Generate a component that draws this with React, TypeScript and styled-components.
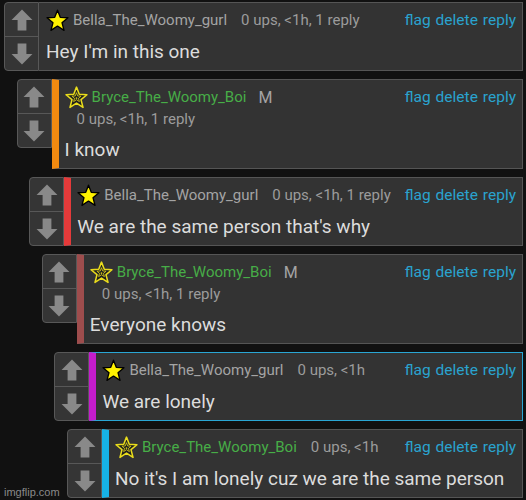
import React from "react";
import styled, { createGlobalStyle } from "styled-components";

const GlobalStyle = createGlobalStyle`
  html, body {
    margin: 0;
    padding: 0;
    background: #111111;
  }
  body {
    font-family: Roboto, "Noto Sans", "Liberation Sans", sans-serif;
    width: 526px;
    height: 500px;
    overflow: hidden;
  }
`;

const Page = styled.div`
  position: relative;
  display: flex;
  flex-direction: column;
  gap: 8px;
  padding: 2px 3px 0 4px;
  height: 500px;
  box-sizing: border-box;
`;

const Row = styled.div<{ $depth: number }>`
  display: flex;
  align-items: flex-start;
  margin-left: ${({ $depth }) => $depth * 12.6}px;
`;

const Votes = styled.div`
  flex: 0 0 35px;
  height: 69px;
  box-sizing: border-box;
  display: flex;
  flex-direction: column;
  background: #353535;
  border: 1px solid #585858;
  border-radius: 4px 0 0 4px;
`;

const VoteBtn = styled.div<{ $top?: boolean }>`
  flex: 1;
  display: flex;
  align-items: center;
  justify-content: center;
  border-bottom: ${({ $top }) => ($top ? "1px solid #585858" : "none")};
`;

const Panel = styled.div<{ $bar?: string; $hi?: boolean }>`
  flex: 1;
  min-height: 69px;
  box-sizing: border-box;
  background: #333333;
  border: 1px solid ${({ $hi }) => ($hi ? "#2aa6d4" : "#555555")};
  border-left: ${({ $bar }) => ($bar ? `7px solid ${$bar}` : "none")};
  padding: 5px 6px 3px ${({ $bar }) => ($bar ? "6px" : "7px")};
`;

const Header = styled.div`
  display: flex;
  align-items: center;
  height: 24px;
`;

const Name = styled.span<{ $mod?: boolean }>`
  margin-left: 4px;
  font-size: 15px;
  color: ${({ $mod }) => ($mod ? "#47ad47" : "#a4a4a4")};
  white-space: nowrap;
`;

const Badge = styled.span`
  margin-left: 12px;
  font-size: 16px;
  color: #a4a4a4;
`;

const Meta = styled.span<{ $own?: boolean }>`
  margin-left: ${({ $own }) => ($own ? "12px" : "14px")};
  font-size: 15px;
  color: #9c9c9c;
  white-space: nowrap;
  display: ${({ $own }) => ($own ? "block" : "inline")};
  line-height: ${({ $own }) => ($own ? "21px" : "normal")};
`;

const Links = styled.div`
  margin-left: auto;
  display: flex;
  gap: 5px;
  font-size: 15.5px;
  color: #2aa3cf;
`;

const Body = styled.div`
  margin-top: 5px;
  line-height: 30px;
  font-size: 19px;
  color: #dcdcdc;
  white-space: nowrap;
`;

const Watermark = styled.div`
  position: absolute;
  left: 4px;
  bottom: 2px;
  font-family: "Liberation Sans", Arial, sans-serif;
  font-size: 11px;
  color: #8a8a8a;
`;

const Arrow = ({ down }: { down?: boolean }) => (
  <svg
    width="22"
    height="22"
    viewBox="0 0 20 20"
    style={down ? { transform: "rotate(180deg)" } : undefined}
  >
    <polygon points="10,0.5 19.5,10 14,10 14,19.5 6,19.5 6,10 0.5,10" fill="#898989" />
  </svg>
);

const STAR = "12,1.2 14.9,8.7 22.9,9.1 16.7,14.3 18.8,22.3 12,17.8 5.2,22.3 7.3,14.3 1.1,9.1 9.1,8.7";
const INNER = "12,7 13.3,10.4 16.8,10.6 14.1,12.8 15,16.3 12,14.3 9,16.3 9.9,12.8 7.2,10.6 10.7,10.4";

const Star = ({ mod }: { mod?: boolean }) =>
  mod ? (
    <svg width="23" height="23" viewBox="0 0 24 24">
      <polygon points={STAR} fill="#1e1e1e" stroke="#e9dc1c" strokeWidth="1.6" strokeLinejoin="round" />
      <polygon points={INNER} fill="none" stroke="#d8cc1a" strokeWidth="0.9" />
      <circle cx="12" cy="12.6" r="0.9" fill="#d8cc1a" />
    </svg>
  ) : (
    <svg width="23" height="23" viewBox="0 0 24 24">
      <polygon points={STAR} fill="#fff200" stroke="#000" strokeWidth="1.4" strokeLinejoin="round" />
    </svg>
  );

type Comment = {
  depth: number;
  user: string;
  mod?: boolean;
  meta: string;
  metaBelow?: boolean;
  text: string;
  bar?: string;
  hi?: boolean;
};

const comments: Comment[] = [
  { depth: 0, user: "Bella_The_Woomy_gurl", meta: "0 ups, <1h, 1 reply", text: "Hey I'm in this one" },
  { depth: 1, user: "Bryce_The_Woomy_Boi", mod: true, meta: "0 ups, <1h, 1 reply", metaBelow: true, text: "I know", bar: "#f28a10" },
  { depth: 2, user: "Bella_The_Woomy_gurl", meta: "0 ups, <1h, 1 reply", text: "We are the same person that's why", bar: "#e53a3a" },
  { depth: 3, user: "Bryce_The_Woomy_Boi", mod: true, meta: "0 ups, <1h, 1 reply", metaBelow: true, text: "Everyone knows", bar: "#9e4d4d" },
  { depth: 4, user: "Bella_The_Woomy_gurl", meta: "0 ups, <1h", text: "We are lonely", bar: "#c41ccc", hi: true },
  { depth: 5, user: "Bryce_The_Woomy_Boi", mod: true, meta: "0 ups, <1h", text: "No it's I am lonely cuz we are the same person", bar: "#16b2e6" },
];

const CommentRow = ({ c }: { c: Comment }) => (
  <Row $depth={c.depth}>
    <Votes>
      <VoteBtn $top>
        <Arrow />
      </VoteBtn>
      <VoteBtn>
        <Arrow down />
      </VoteBtn>
    </Votes>
    <Panel $bar={c.bar} $hi={c.hi}>
      <Header>
        <Star mod={c.mod} />
        <Name $mod={c.mod}>{c.user}</Name>
        {c.metaBelow ? <Badge>M</Badge> : <Meta>{c.meta}</Meta>}
        <Links>
          <span>flag</span>
          <span>delete</span>
          <span>reply</span>
        </Links>
      </Header>
      {c.metaBelow && <Meta $own>{c.meta}</Meta>}
      <Body>{c.text}</Body>
    </Panel>
  </Row>
);

export default function App() {
  return (
    <>
      <GlobalStyle />
      <Page>
        {comments.map((c, i) => (
          <CommentRow c={c} key={i} />
        ))}
        <Watermark>imgflip.com</Watermark>
      </Page>
    </>
  );
}
